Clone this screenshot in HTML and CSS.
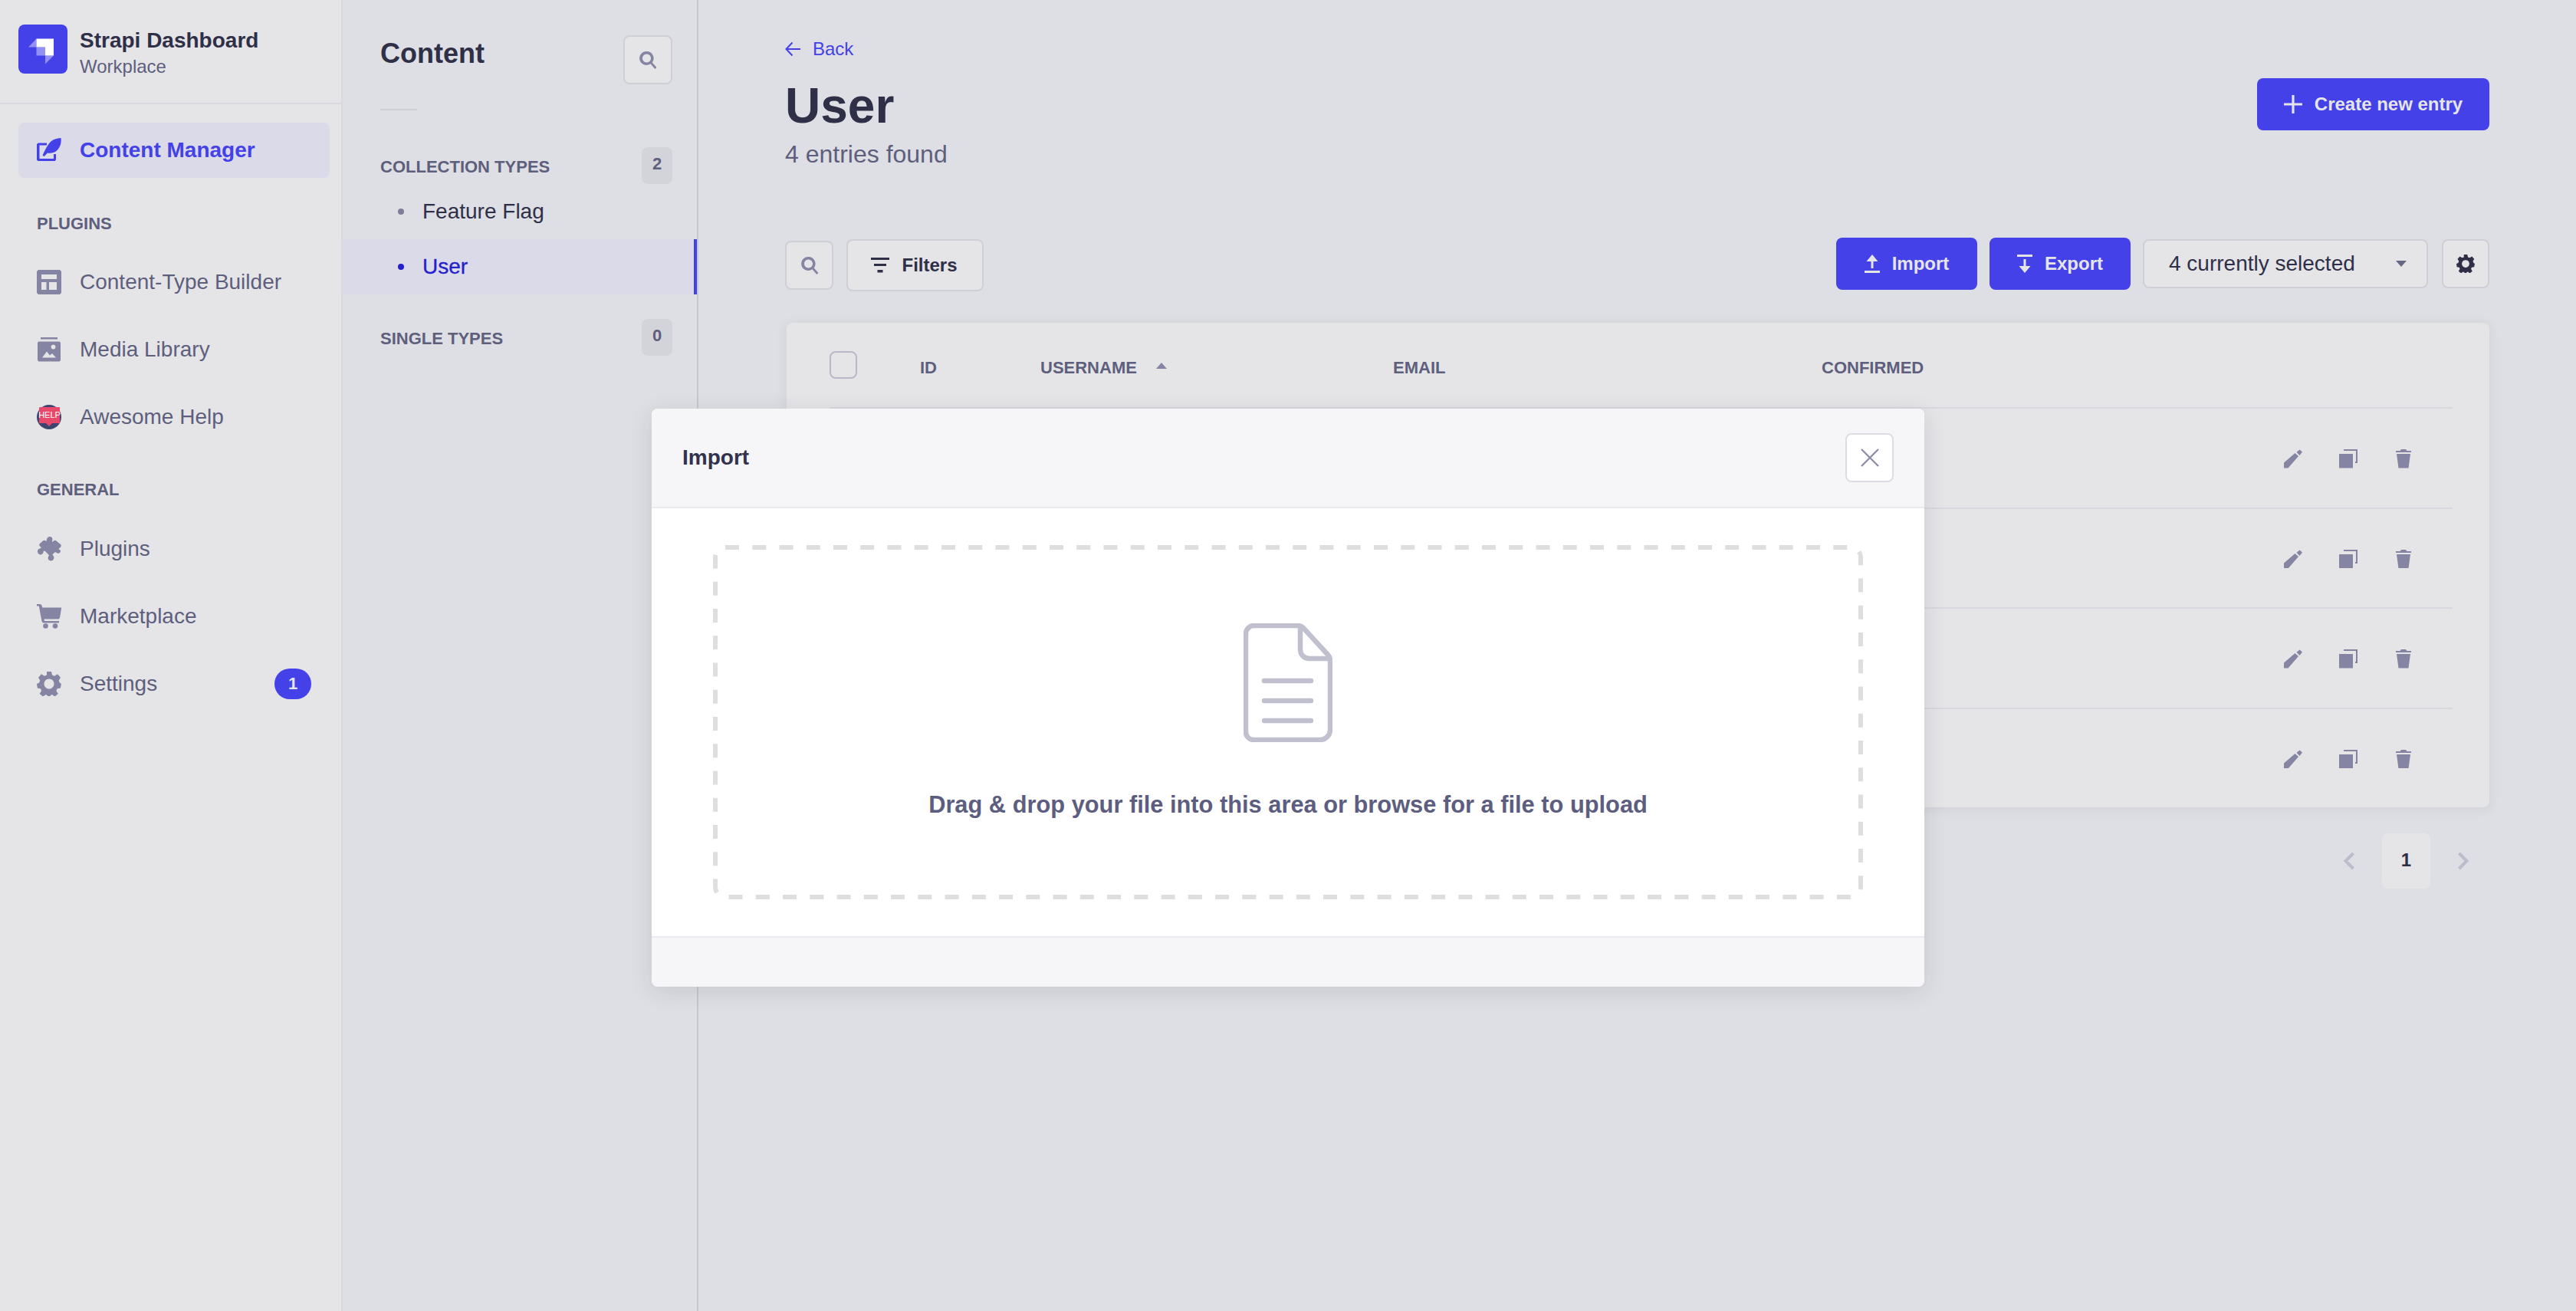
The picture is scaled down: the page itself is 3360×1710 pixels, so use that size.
FILE: index.html
```html
<!DOCTYPE html>
<html lang="en">
<head>
    <meta charset="UTF-8">
    <title>Strapi Dashboard</title>
    <link rel="stylesheet" href="styles.css">
</head>
<body>
    <div class="app">
        <aside class="sidebar">
            <div class="brand">
                <div class="brand-logo">
                    <svg viewBox="0 0 64 64" width="64" height="64">
                        <path d="M23.500 18.500h22.500v22h-11v-11h-11.500z" fill="#fff"/>
                        <path d="M23.500 29.500v-11l-10.500 11z" fill="#fff" opacity=".42"/>
                        <path d="M23.500 29.500h11.500v11h-11.500z" fill="#fff" opacity=".42"/>
                        <path d="M35 40.500h11l-11 11z" fill="#fff" opacity=".42"/>
                    </svg>
                </div>
                <div class="brand-text">
                    <div class="brand-name">Strapi Dashboard</div>
                    <div class="brand-sub">Workplace</div>
                </div>
            </div>
            <nav class="main-nav">
                <a class="nav-item active">
                    <svg class="nav-icon" viewBox="0 0 32 32"><path d="M2 6.500h11v3H3.500v17.500h18.500v-6h3v7.500l-1.500 1.500H1.500L0 28.500V8z" fill="#4441e8"/><path d="M31.500 0c.8 6-1 13-6 17-3.400 2.700-8 3-11.500 2.400L9.500 24l-2-1.500C10 18 12 12 17 6c4-4.500 9-5.500 14.500-6z" fill="#4441e8"/></svg>
                    <span>Content Manager</span>
                </a>
                <div class="nav-heading">PLUGINS</div>
                <a class="nav-item">
                    <svg class="nav-icon" viewBox="0 0 32 32"><path fill-rule="evenodd" d="M2 0h28l2 2v28l-2 2H2l-2-2V2zM6 6v6h20V6zM6 16v10h6.500V16zM16 16v10h10V16z" fill="#8585a3"/></svg>
                    <span>Content-Type Builder</span>
                </a>
                <a class="nav-item">
                    <svg class="nav-icon" viewBox="0 0 32 32"><path d="M5 0h22v2.500H5z" fill="#8585a3"/><path fill-rule="evenodd" d="M2.500 5.500h27l1.500 1.500v23l-1.500 1.500h-27L1 30V7zM7 26.500h18l-5-5.500-3 2.500-4-5zM21.500 9.500a3 3 0 1 0 .01 0z" fill="#8585a3"/></svg>
                    <span>Media Library</span>
                </a>
                <a class="nav-item">
                    <svg class="nav-icon" viewBox="0 0 32 32">
                        <circle cx="16" cy="16" r="16" fill="#3e4470"/>
                        <path d="M4 3h26v21H20l-4 4-4-4H3V4z" fill="#e8496b"/>
                        <text x="16.500" y="17" text-anchor="middle" class="help-text">HELP</text>
                    </svg>
                    <span>Awesome Help</span>
                </a>
                <div class="nav-heading general">GENERAL</div>
                <a class="nav-item">
                    <svg class="nav-icon" viewBox="0 0 32 32"><path d="M13 5.500c-.5-3 1-5.500 4-5.500s4 3 3 5.500c-.3 1 .5 1.500 1 1l1-1c1-1 2.500-1 3.500 0L31 10c1 1 1 2.500 0 3.500l-2 2c-.7.7-.2 1.700.6 1.500 1.400-.4 2.400 3-.6 4.500-2 1-3.500-.5-4-.9-.6-.5-1.500-.3-2 .2l-2 2c-.5.5-.3 1.300.2 1.700 2.300 2 1.300 7-2.700 7-3.500 0-5-4-3-6 .6-.6.4-1.400-.2-2L11 19c-1-1-2.200-.6-2.300.5-.2 3.500-3.700 5-6.200 3S.5 16 4 15.500c1.500-.2 2-1 1.300-1.700L4 12.500c-1-1-1-2.500 0-3.500l4-3.500c1-1 2.500-1 3.500 0z" fill="#8585a3"/></svg>
                    <span>Plugins</span>
                </a>
                <a class="nav-item">
                    <svg class="nav-icon" viewBox="0 0 32 32"><path d="M0 0h4.500l2 1.500.7 3H32v1.500l-2 12-1.500 1.500h-19l.5 2.500h19v2.500H8L6.500 22.500 2.800 2.500H0z" fill="#8585a3"/><circle cx="11.500" cy="28.500" r="3.300" fill="#8585a3"/><circle cx="24" cy="28.500" r="3.300" fill="#8585a3"/></svg>
                    <span>Marketplace</span>
                </a>
                <a class="nav-item">
                    <svg class="nav-icon" viewBox="0 0 32 32"><path fill-rule="evenodd" d="M13 0h6l1 4.500 3 1.300 4-2.500 4 4.400-2.300 4 1.200 2.800L32 16l-1.200 5.500-4.200.8-1.200 2.800 2.400 3.900-4.300 3.500-3.700-2.400-1.600.7L17.500 32h-3l-1.300-1.200-1.500-.7L8 32.500l-4.300-3.500 2.400-3.900-1.200-2.800L.8 21.500 0 16l3.100-1.500 1.200-2.800-2.300-4 4-4.400 4 2.500 3-1.300zM16 9.500a6.500 6.500 0 1 0 .01 0z" fill="#8585a3"/></svg>
                    <span>Settings</span>
                    <b class="nav-badge">1</b>
                </a>
            </nav>
        </aside>

        <section class="subnav">
            <div class="subnav-head">
                <h2>Content</h2>
                <button class="icon-btn">
                    <svg viewBox="0 0 24 24" width="24" height="24"><path fill-rule="evenodd" d="M10.500 1a9 9 0 0 1 7.200 14.400l5.800 6.700-2.200 1.900-5.800-6.800A9 9 0 1 1 10.500 1zm0 3.500a5.500 5.500 0 1 0 .01 0z" fill="#8585a3"/></svg>
                </button>
            </div>
            <div class="subnav-rule"></div>
            <div class="subnav-section">
                <span>COLLECTION TYPES</span><em class="count">2</em>
            </div>
            <a class="subnav-link"><i></i>Feature Flag</a>
            <a class="subnav-link current"><i></i>User</a>
            <div class="subnav-section single">
                <span>SINGLE TYPES</span><em class="count">0</em>
            </div>
        </section>

        <main class="content">
            <a class="back">
                <svg viewBox="0 0 20 20" width="20" height="20"><path d="M9.500 1.500L1.500 10l8 8.500M1.500 10H20" fill="none" stroke="#4441e8" stroke-width="2"/></svg>
                Back
            </a>
            <div class="page-head">
                <div>
                    <h1>User</h1>
                    <p class="subtitle">4 entries found</p>
                </div>
                <button class="btn btn-primary btn-create">
                    <svg viewBox="0 0 24 24" width="24" height="24"><path d="M12 0v24M0 12h24" stroke="#e5e5e8" stroke-width="3.200"/></svg>
                    Create new entry
                </button>
            </div>
            <div class="toolbar">
                <div class="toolbar-left">
                    <button class="icon-btn">
                        <svg viewBox="0 0 24 24" width="24" height="24"><path fill-rule="evenodd" d="M10.500 1a9 9 0 0 1 7.200 14.400l5.800 6.700-2.200 1.900-5.800-6.800A9 9 0 1 1 10.500 1zm0 3.500a5.500 5.500 0 1 0 .01 0z" fill="#8585a3"/></svg>
                    </button>
                    <button class="btn btn-filters">
                        <svg viewBox="0 0 24 20" width="24" height="20"><path d="M0 0h24v3H0zM4 8h16v3H4zM8.500 16h7v3.500h-7z" fill="#2f2f48"/></svg>
                        Filters
                    </button>
                </div>
                <div class="toolbar-right">
                    <button class="btn btn-primary btn-action">
                        <svg viewBox="0 0 20 24" width="20" height="24"><path d="M10 0l7.500 9H11.500v9h-3V9H2.500zM0 21h20v3H0z" fill="#e5e5e8"/></svg>
                        Import
                    </button>
                    <button class="btn btn-primary btn-action">
                        <svg viewBox="0 0 20 24" width="20" height="24"><path d="M0 0h20v3H0zM8.500 6h3v9h6L10 24 2.500 15h6z" fill="#e5e5e8"/></svg>
                        Export
                    </button>
                    <div class="select">
                        <span>4 currently selected</span>
                        <i class="caret"></i>
                    </div>
                    <button class="icon-btn gear-btn">
                        <svg viewBox="0 0 32 32" width="24" height="24"><path fill-rule="evenodd" d="M13 0h6l1 4.500 3 1.300 4-2.500 4 4.400-2.300 4 1.200 2.800L32 16l-1.200 5.500-4.200.8-1.200 2.800 2.400 3.900-4.300 3.500-3.700-2.400-1.600.7L17.500 32h-3l-1.300-1.200-1.500-.7L8 32.500l-4.300-3.500 2.400-3.900-1.200-2.800L.8 21.500 0 16l3.100-1.500 1.200-2.800-2.300-4 4-4.400 4 2.500 3-1.300zM16 9.500a6.500 6.500 0 1 0 .01 0z" fill="#2f2f48"/></svg>
                    </button>
                </div>
            </div>
            <div class="table-card">
                <div class="table-row table-head">
                    <span class="checkbox"></span>
                    <span class="col-id">ID</span>
                    <span class="col-user">USERNAME<i class="sort"></i></span>
                    <span class="col-email">EMAIL</span>
                    <span class="col-conf">CONFIRMED</span>
                </div>
                <div class="table-row body-row">
                    <div class="row-actions">
                        <svg viewBox="0 0 24 24.500" width="24" height="24.500"><path d="M0 24.500V17.500L14.500 5l4.500 4L5.500 24.500zM16.500 3.700L20.500.5l3.500 3-3.500 4.500z" fill="#8585a3"/></svg>
                        <svg viewBox="0 0 24 24.500" width="24" height="24.500"><path d="M0 6h18v18.500H0zM6 0h18v18h-3v-2h1V2H6z" fill="#8585a3"/></svg>
                        <svg class="trash" viewBox="0 0 20 24.500" width="20" height="24.500"><path d="M0 2h5.500L7 0h6l1.500 2H20v2H0zM1 6h18l-2.500 18.500h-13z" fill="#8585a3"/></svg>
                    </div>
                </div>
                <div class="table-row body-row">
                    <div class="row-actions">
                        <svg viewBox="0 0 24 24.500" width="24" height="24.500"><path d="M0 24.500V17.500L14.500 5l4.500 4L5.500 24.500zM16.500 3.700L20.500.5l3.500 3-3.500 4.500z" fill="#8585a3"/></svg>
                        <svg viewBox="0 0 24 24.500" width="24" height="24.500"><path d="M0 6h18v18.500H0zM6 0h18v18h-3v-2h1V2H6z" fill="#8585a3"/></svg>
                        <svg class="trash" viewBox="0 0 20 24.500" width="20" height="24.500"><path d="M0 2h5.500L7 0h6l1.500 2H20v2H0zM1 6h18l-2.500 18.500h-13z" fill="#8585a3"/></svg>
                    </div>
                </div>
                <div class="table-row body-row">
                    <div class="row-actions">
                        <svg viewBox="0 0 24 24.500" width="24" height="24.500"><path d="M0 24.500V17.500L14.500 5l4.500 4L5.500 24.500zM16.500 3.700L20.500.5l3.500 3-3.500 4.500z" fill="#8585a3"/></svg>
                        <svg viewBox="0 0 24 24.500" width="24" height="24.500"><path d="M0 6h18v18.500H0zM6 0h18v18h-3v-2h1V2H6z" fill="#8585a3"/></svg>
                        <svg class="trash" viewBox="0 0 20 24.500" width="20" height="24.500"><path d="M0 2h5.500L7 0h6l1.500 2H20v2H0zM1 6h18l-2.500 18.500h-13z" fill="#8585a3"/></svg>
                    </div>
                </div>
                <div class="table-row body-row last">
                    <div class="row-actions">
                        <svg viewBox="0 0 24 24.500" width="24" height="24.500"><path d="M0 24.500V17.500L14.500 5l4.500 4L5.500 24.500zM16.500 3.700L20.500.5l3.500 3-3.500 4.500z" fill="#8585a3"/></svg>
                        <svg viewBox="0 0 24 24.500" width="24" height="24.500"><path d="M0 6h18v18.500H0zM6 0h18v18h-3v-2h1V2H6z" fill="#8585a3"/></svg>
                        <svg class="trash" viewBox="0 0 20 24.500" width="20" height="24.500"><path d="M0 2h5.500L7 0h6l1.500 2H20v2H0zM1 6h18l-2.500 18.500h-13z" fill="#8585a3"/></svg>
                    </div>
                </div>
            </div>
            <div class="pagination">
                <svg viewBox="0 0 16 24" width="16" height="24"><path d="M13.500 2L3.500 12l10 10" fill="none" stroke="#bcbccb" stroke-width="4"/></svg>
                <span class="page-num">1</span>
                <svg viewBox="0 0 16 24" width="16" height="24"><path d="M2.500 2l10 10-10 10" fill="none" stroke="#bcbccb" stroke-width="4"/></svg>
            </div>
        </main>
    </div>

    <!-- Import dialog -->
    <div class="modal">
        <div class="modal-head">
            <h3>Import</h3>
            <button class="modal-close">
                <svg viewBox="0 0 24 24" width="24" height="24"><path d="M1 1l22 22M23 1L1 23" stroke="#8e8ea9" stroke-width="2.400"/></svg>
            </button>
        </div>
        <div class="modal-body">
            <div class="dropzone">
                <svg class="dash-frame" width="1500" height="462"><rect x="3" y="3" width="1494" height="456" rx="13" fill="none" stroke="#dedede" stroke-width="6" stroke-dasharray="18 17.250"/></svg>
                <svg viewBox="0 0 116 155" width="116" height="155">
                    <path d="M13 3h58c2.500 0 5 1 7 3l32 35c2 2 3 4 3 7v91c0 7-6 13-13 13H13c-6 0-10-5-10-10V13C3 8 8 3 13 3z" fill="none" stroke="#c0c0cf" stroke-width="6.500"/>
                    <path d="M74 6v28c0 7 5 12 12 12h27" fill="none" stroke="#c0c0cf" stroke-width="6.500"/>
                    <path d="M27 75h61M27 101h61M27 127h61" stroke="#c0c0cf" stroke-width="6.500" stroke-linecap="round"/>
                </svg>
                <p>Drag &amp; drop your file into this area or browse for a file to upload</p>
            </div>
        </div>
        <div class="modal-foot"></div>
    </div>
</body>
</html>
```

FILE: styles.css
```css
* {
    box-sizing: border-box;
}

html, body {
    margin: 0;
    height: 100%;
}

body {
    position: relative;
    font-family: "Liberation Sans", Arial, sans-serif;
    background: #dedfe4;
    color: #2f2f48;
    overflow: hidden;
}

button {
    font-family: inherit;
    cursor: pointer;
}

.app {
    display: flex;
    height: 1710px;
}

/* left sidebar */
.sidebar {
    width: 447px;
    flex: none;
    background: #e5e5e8;
    border-right: 2px solid #d8d8de;
}

.brand {
    height: 136px;
    padding: 32px 24px 0;
    display: flex;
    gap: 16px;
    border-bottom: 2px solid #d8d8de;
}

.brand-logo {
    width: 64px;
    height: 64px;
    background: #4441e8;
    border-radius: 8px;
}

.brand-logo svg {
    display: block;
}

.brand-name {
    margin-top: 4px;
    font-size: 28px;
    line-height: 34px;
    font-weight: bold;
    color: #2f2f48;
}

.brand-sub {
    margin-top: 2px;
    font-size: 24px;
    line-height: 30px;
    color: #5e5e7d;
}

.main-nav {
    padding: 24px 15px 0 24px;
}

.nav-item {
    display: flex;
    align-items: center;
    height: 72px;
    margin-bottom: 16px;
    padding: 0 24px;
    gap: 24px;
    font-size: 28px;
    color: #5e5e7d;
    border-radius: 8px;
}

.nav-item.active {
    background: #dadae9;
    color: #4441e8;
    font-weight: bold;
}

.nav-icon {
    width: 32px;
    height: 32px;
    flex: none;
}

.help-text {
    font-size: 11px;
    fill: #fff;
}

.nav-heading {
    height: 24px;
    margin: 48px 24px 28px;
    font-size: 22px;
    line-height: 24px;
    font-weight: bold;
    color: #5e5e7d;
}

.nav-heading.general {
    margin-top: 47px;
    margin-bottom: 29px;
}

.nav-badge {
    margin-left: auto;
    width: 48px;
    height: 40px;
    border-radius: 20px;
    background: #4441e8;
    color: #e5e5e8;
    font-size: 22px;
    line-height: 40px;
    text-align: center;
}

/* content types column */
.subnav {
    width: 464px;
    flex: none;
    border-right: 2px solid #c6c7d0;
}

.subnav-head {
    display: flex;
    justify-content: space-between;
    padding: 46px 32px 0 49px;
}

.subnav-head h2 {
    margin: 0;
    font-size: 36px;
    line-height: 48px;
    height: 64px;
    font-weight: bold;
    color: #2f2f48;
}

.icon-btn {
    width: 64px;
    height: 64px;
    padding: 0;
    display: flex;
    align-items: center;
    justify-content: center;
    background: #e5e5e8;
    border: 2px solid #cfcfd8;
    border-radius: 8px;
}

.subnav-rule {
    width: 48px;
    height: 2px;
    margin: 32px 0 48px 49px;
    background: #cfcfd8;
}

.subnav-section {
    display: flex;
    justify-content: space-between;
    align-items: center;
    padding: 0 32px 0 49px;
    height: 48px;
    font-size: 22px;
    font-weight: bold;
    color: #5e5e7d;
}

.subnav-section span {
    padding-top: 4px;
}

.subnav-section.single {
    margin-top: 32px;
}

.count {
    width: 40px;
    height: 48px;
    border-radius: 8px;
    background: #d3d4da;
    font-style: normal;
    font-size: 22px;
    line-height: 44px;
    text-align: center;
    color: #5e5e7d;
}

.subnav-link {
    display: flex;
    align-items: center;
    height: 72px;
    padding-left: 72px;
    font-size: 28px;
    color: #2f2f48;
}

.subnav-link i {
    width: 8px;
    height: 8px;
    margin-right: 24px;
    border-radius: 50%;
    background: #7d7d96;
}

.subnav-link.current {
    background: #dadae9;
    color: #261fcd;
    -webkit-text-stroke: .3px #261fcd;
    border-right: 4px solid #4441e8;
}

.subnav-link.current i {
    background: #261fcd;
}

/* main area */
.content {
    flex: 1;
    padding: 50px 113px 0 113px;
}

.back {
    display: flex;
    align-items: center;
    gap: 16px;
    height: 28px;
    font-size: 24px;
    color: #4441e8;
}

.page-head {
    display: flex;
    justify-content: space-between;
    align-items: flex-start;
    margin-top: 24px;
    height: 208px;
}

.page-head h1 {
    margin: 4px 0 0;
    font-size: 64px;
    line-height: 64px;
    font-weight: bold;
    color: #2f2f48;
}

.subtitle {
    margin: 11px 0 0;
    font-size: 32px;
    line-height: 40px;
    color: #5e5e7d;
}

.btn {
    display: flex;
    align-items: center;
    justify-content: center;
    font-size: 24px;
    font-weight: bold;
    border-radius: 8px;
}

.btn-primary {
    background: #4441e8;
    border: none;
    color: #e5e5e8;
}

.btn-create {
    width: 303px;
    height: 68px;
    gap: 16px;
}

.toolbar {
    display: flex;
    align-items: center;
    height: 68px;
}

.toolbar-left {
    display: flex;
    align-items: center;
    gap: 17px;
    margin-top: 4px;
}

.toolbar .icon-btn {
    width: 63px;
}

.btn-filters {
    width: 179px;
    height: 68px;
    gap: 16px;
    padding-left: 4px;
    background: #e5e5e8;
    border: 2px solid #cfcfd8;
    color: #2f2f48;
}

.toolbar-right {
    margin-left: auto;
    display: flex;
    align-items: center;
    gap: 16px;
}

.btn-action {
    width: 184px;
    height: 68px;
    gap: 16px;
}

.select {
    display: flex;
    align-items: center;
    justify-content: space-between;
    width: 372px;
    height: 64px;
    margin-right: 2px;
    padding: 0 32px;
    background: #e5e5e8;
    border: 2px solid #cfcfd8;
    border-radius: 8px;
    font-size: 28px;
    color: #2f2f48;
}

.caret {
    margin-right: -6px;
    border-left: 7px solid transparent;
    border-right: 7px solid transparent;
    border-top: 8px solid #666687;
}

.toolbar-right .gear-btn {
    width: 62px;
}

.table-card {
    margin: 43px 0 0 2px;
    height: 632px;
    padding: 0 48px 0 56px;
    background: #e5e5e8;
    border-radius: 8px;
    box-shadow: 0 2px 16px rgba(33, 33, 52, .08);
}

.table-row {
    position: relative;
    height: 130.500px;
    border-bottom: 2px solid #d8d8de;
}

.table-head {
    display: flex;
    align-items: center;
    height: 112px;
    font-size: 22px;
    font-weight: bold;
    color: #5e5e7d;
}

.checkbox {
    width: 36px;
    height: 36px;
    border: 2px solid #b8b8c8;
    border-radius: 8px;
    background: #e5e5e8;
}

.col-id,
.col-user,
.col-email,
.col-conf {
    margin-top: 8px;
}

.col-id {
    margin-left: 82px;
    width: 157px;
}

.col-user {
    width: 460px;
    display: flex;
    align-items: center;
}

.col-email {
    width: 559px;
}

.sort {
    margin-left: 25px;
    margin-bottom: 6px;
    border-left: 7px solid transparent;
    border-right: 7px solid transparent;
    border-bottom: 8px solid #8585a3;
}

.body-row.last {
    border-bottom: none;
}

.row-actions {
    position: absolute;
    right: 54px;
    top: 53px;
    display: flex;
    gap: 48px;
}

.trash {
    margin-left: 2px;
}

.pagination {
    display: flex;
    align-items: center;
    justify-content: flex-end;
    gap: 35px;
    margin-top: 34px;
    padding-right: 26px;
}

.page-num {
    width: 63px;
    height: 72px;
    background: #e5e5e8;
    border-radius: 8px;
    font-size: 24px;
    font-weight: bold;
    line-height: 70px;
    text-align: center;
    color: #2f2f48;
}

/* import dialog, sits over the page */
.modal {
    position: absolute;
    left: 850px;
    top: 533px;
    width: 1660px;
    background: #fff;
    border-radius: 8px;
    box-shadow: 0 6px 30px rgba(33, 33, 52, .12);
}

.modal-head {
    display: flex;
    align-items: center;
    justify-content: space-between;
    height: 130px;
    padding: 0 40px;
    background: #f6f6f9;
    border-bottom: 2px solid #eaeaef;
    border-radius: 8px 8px 0 0;
}

.modal-head h3 {
    margin: 0;
    font-size: 28px;
    font-weight: bold;
    color: #32324d;
}

.modal-close {
    width: 63px;
    height: 64px;
    padding: 0;
    display: flex;
    align-items: center;
    justify-content: center;
    background: #fff;
    border: 2px solid #dcdce4;
    border-radius: 8px;
}

.modal-body {
    padding: 48px 80px;
}

.dropzone {
    position: relative;
    display: flex;
    flex-direction: column;
    align-items: center;
    height: 462px;
    padding-top: 102px;
}

.dash-frame {
    position: absolute;
    left: 0;
    top: 0;
}

.dropzone p {
    margin: 62px 0 0;
    font-size: 30.800px;
    line-height: 40px;
    font-weight: bold;
    color: #5d5d80;
}

.modal-foot {
    height: 66px;
    background: #f6f6f9;
    border-top: 2px solid #eaeaef;
    border-radius: 0 0 8px 8px;
}
```
